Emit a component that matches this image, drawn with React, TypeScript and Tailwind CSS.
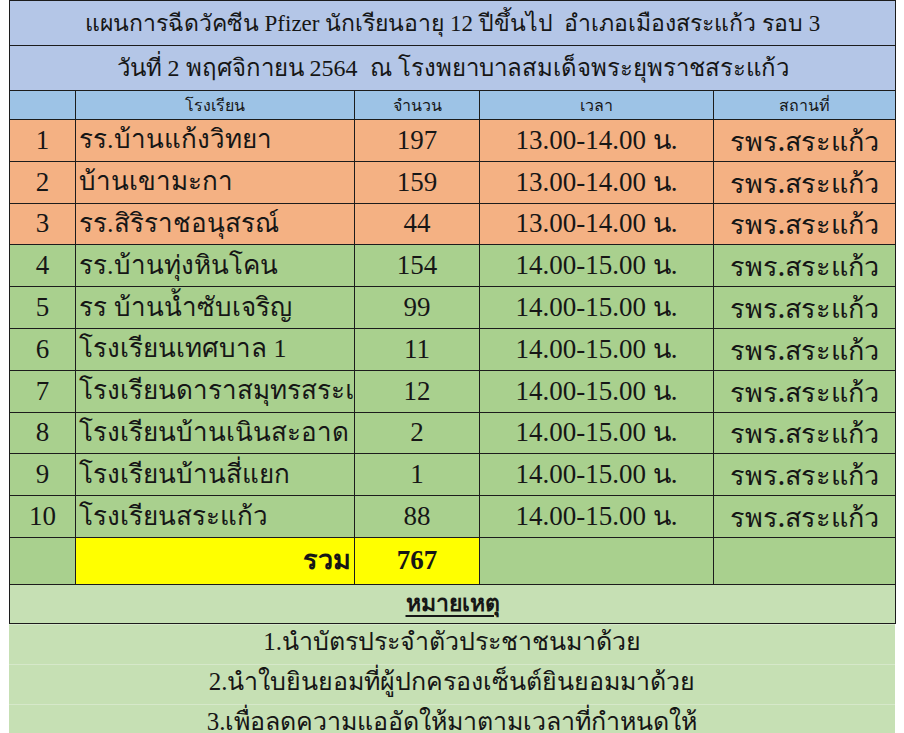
import React from "react";

const rows = [
  { no: 1, school: "รร.บ้านแก้งวิทยา", count: "197", time: "13.00-14.00 น.", tone: "orange" },
  { no: 2, school: "บ้านเขามะกา", count: "159", time: "13.00-14.00 น.", tone: "orange" },
  { no: 3, school: "รร.สิริราชอนุสรณ์", count: "44", time: "13.00-14.00 น.", tone: "orange" },
  { no: 4, school: "รร.บ้านทุ่งหินโคน", count: "154", time: "14.00-15.00 น.", tone: "green" },
  { no: 5, school: "รร บ้านน้ำซับเจริญ", count: "99", time: "14.00-15.00 น.", tone: "green" },
  { no: 6, school: "โรงเรียนเทศบาล 1", count: "11", time: "14.00-15.00 น.", tone: "green" },
  { no: 7, school: "โรงเรียนดาราสมุทรสระแก้ว", count: "12", time: "14.00-15.00 น.", tone: "green" },
  { no: 8, school: "โรงเรียนบ้านเนินสะอาด", count: "2", time: "14.00-15.00 น.", tone: "green" },
  { no: 9, school: "โรงเรียนบ้านสี่แยก", count: "1", time: "14.00-15.00 น.", tone: "green" },
  { no: 10, school: "โรงเรียนสระแก้ว", count: "88", time: "14.00-15.00 น.", tone: "green" },
];

const notes = [
  "1.นำบัตรประจำตัวประชาชนมาด้วย",
  "2.นำใบยินยอมที่ผู้ปกครองเซ็นต์ยินยอมมาด้วย",
  "3.เพื่อลดความแออัดให้มาตามเวลาที่กำหนดให้",
];

const cell = "border-[1.5px] border-[#1c1c1c]";
const sans = { fontFamily: '"Noto Sans", "DejaVu Sans", sans-serif' };

export default function App() {
  return (
    <div className="min-h-screen bg-white text-[#161616] overflow-hidden" style={{ fontFamily: '"Liberation Serif", serif' }}>
      <div className="ml-[9px] w-[886px]">
        <table className="w-full border-collapse table-fixed">
          <colgroup>
            <col className="w-[66px]" />
            <col className="w-[279px]" />
            <col className="w-[125px]" />
            <col className="w-[234px]" />
            <col className="w-[182px]" />
          </colgroup>
          <tbody>
            <tr className="h-[45px] bg-[#b4c6e7]">
              <td colSpan={5} className={`${cell} text-center text-[23px] leading-none`}>
                แผนการฉีดวัคซีน Pfizer นักเรียนอายุ 12 ปีขึ้นไป&nbsp; อำเภอเมืองสระแก้ว รอบ 3
              </td>
            </tr>
            <tr className="h-[45px] bg-[#b4c6e7]">
              <td colSpan={5} className={`${cell} text-center text-[24px] leading-none`}>
                วันที่ 2 พฤศจิกายน 2564&nbsp; ณ โรงพยาบาลสมเด็จพระยุพราชสระแก้ว
              </td>
            </tr>
            <tr className="h-[29px] bg-[#9dc3e6] text-[16px] leading-none" style={sans}>
              <td className={cell}></td>
              <td className={`${cell} text-center`}>โรงเรียน</td>
              <td className={`${cell} text-center`}>จำนวน</td>
              <td className={`${cell} text-center`}>เวลา</td>
              <td className={`${cell} text-center`}>สถานที่</td>
            </tr>
            {rows.map((r) => (
              <tr key={r.no} className={`h-[41.8px] text-[26px] leading-none ${r.tone === "orange" ? "bg-[#f4b183]" : "bg-[#a9d08e]"}`}>
                <td className={`${cell} text-center text-[27px]`}>{r.no}</td>
                <td className={`${cell} pl-[3px] whitespace-nowrap overflow-hidden`}>{r.school}</td>
                <td className={`${cell} text-center text-[27px]`}>{r.count}</td>
                <td className={`${cell} text-center text-[27px]`}>{r.time}</td>
                <td className={`${cell} text-center text-[27px] font-medium`} style={sans}>
                  รพร.สระแก้ว
                </td>
              </tr>
            ))}
            <tr className="h-[47px] bg-[#a9d08e] text-[27px] leading-none font-bold">
              <td className={cell}></td>
              <td className={`${cell} bg-[#ffff00] text-right pr-[3px]`}>รวม</td>
              <td className={`${cell} bg-[#ffff00] text-center`}>767</td>
              <td className={cell}></td>
              <td className={cell}></td>
            </tr>
            <tr className="h-[39px] bg-[#c6e0b4]">
              <td colSpan={5} className={`${cell} text-center text-[23px] font-bold leading-none`}>
                <span className="underline underline-offset-4">หมายเหตุ</span>
              </td>
            </tr>
          </tbody>
        </table>
        <div className="flex flex-col bg-[#c6e0b4]">
          {notes.map((n, i) => (
            <div key={i} className="h-[40px] flex items-center justify-center border-t border-[#d6e8ca] text-[25px] leading-none pb-[5px]">
              {n}
            </div>
          ))}
        </div>
      </div>
    </div>
  );
}
